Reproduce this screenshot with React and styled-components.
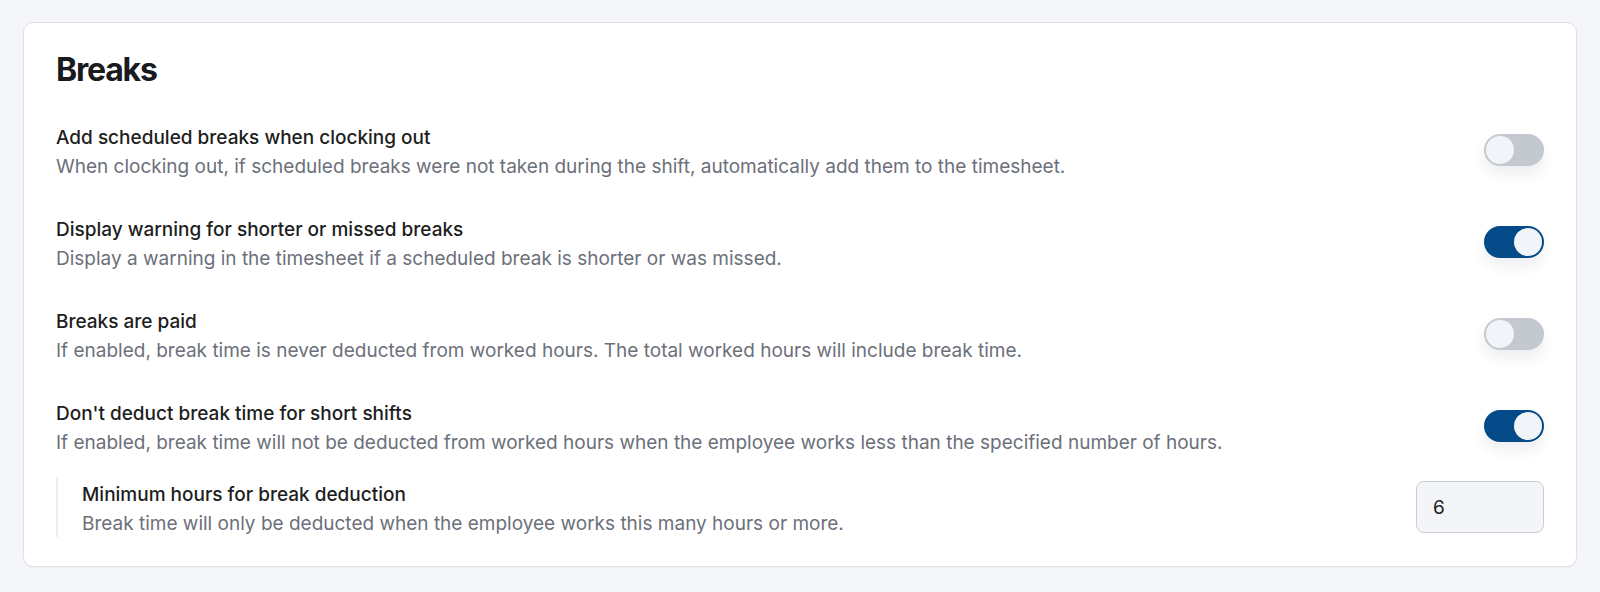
import styled, { createGlobalStyle } from "styled-components";

const GlobalStyle = createGlobalStyle`
    * {
        box-sizing: border-box;
    }

    body {
        margin: 0;
        background-color: #f5f6f9;
        font-family: Inter, "Noto Sans", sans-serif;
        color: #1d1e21;
    }
`;

const PageStyle = styled.main`
    padding: 22px 23px 24px;
`;

const CardStyle = styled.section`
    background-color: #ffffff;
    border: 1px solid #dfe1e6;
    border-radius: 10px;
    padding: 27px 32px 29px;
    box-shadow: 0 1px 2px rgba(16, 24, 40, 0.04);
`;

const CardTitleStyle = styled.h2`
    margin: 0 0 16px;
    font-size: 32px;
    line-height: 40px;
    font-weight: 700;
    letter-spacing: -1.2px;
    color: #1a1b1e;
`;

const SettingRowStyle = styled.div`
    display: flex;
    align-items: flex-start;
    justify-content: space-between;
    gap: 32px;
    padding: ${(props) => (props.$nested ? "4px 0 0 24px" : "18px 0")};
    margin-top: ${(props) => (props.$nested ? "3px" : "0")};
    border-left: ${(props) => (props.$nested ? "2px solid #eceef1" : "none")};
`;

const SettingTextStyle = styled.div`
    display: flex;
    flex-direction: column;
    gap: 2px;
`;

const SettingLabelStyle = styled.span`
    font-size: 19px;
    line-height: 27px;
    font-weight: 500;
    color: #1d1e21;
`;

const SettingDescriptionStyle = styled.span`
    font-size: 19px;
    line-height: 27px;
    color: #6c707a;
`;

const ToggleStyle = styled.button`
    position: relative;
    flex-shrink: 0;
    width: 60px;
    height: 32px;
    margin-top: 10px;
    padding: 0;
    border: none;
    border-radius: 16px;
    cursor: pointer;
    background-color: ${(props) => (props.$on ? "#044a88" : "#c4c8cf")};
    box-shadow: 0 8px 14px rgba(30, 40, 60, 0.08);

    &::after {
        content: "";
        position: absolute;
        top: 2px;
        left: ${(props) => (props.$on ? "30px" : "2px")};
        width: 28px;
        height: 28px;
        border-radius: 50%;
        background-color: #f1f4f9;
    }
`;

const NumberInputStyle = styled.input`
    width: 128px;
    height: 52px;
    flex-shrink: 0;
    padding: 0 16px;
    border: 1px solid #c9ccd2;
    border-radius: 8px;
    background-color: #f3f5f8;
    font-family: Inter, "Noto Sans", sans-serif;
    font-size: 19px;
    color: #1d1e21;
    outline: none;
`;

const settings = [
    {
        label: "Add scheduled breaks when clocking out",
        description:
            "When clocking out, if scheduled breaks were not taken during the shift, automatically add them to the timesheet.",
        on: false,
    },
    {
        label: "Display warning for shorter or missed breaks",
        description:
            "Display a warning in the timesheet if a scheduled break is shorter or was missed.",
        on: true,
    },
    {
        label: "Breaks are paid",
        description:
            "If enabled, break time is never deducted from worked hours. The total worked hours will include break time.",
        on: false,
    },
    {
        label: "Don't deduct break time for short shifts",
        description:
            "If enabled, break time will not be deducted from worked hours when the employee works less than the specified number of hours.",
        on: true,
    },
];

function App() {
    return (
        <>
            <GlobalStyle />
            <PageStyle>
                <CardStyle>
                    <CardTitleStyle>Breaks</CardTitleStyle>

                    {settings.map((setting) => (
                        <SettingRowStyle key={setting.label}>
                            <SettingTextStyle>
                                <SettingLabelStyle>{setting.label}</SettingLabelStyle>
                                <SettingDescriptionStyle>
                                    {setting.description}
                                </SettingDescriptionStyle>
                            </SettingTextStyle>
                            <ToggleStyle
                                type="button"
                                role="switch"
                                aria-checked={setting.on}
                                $on={setting.on}
                            />
                        </SettingRowStyle>
                    ))}

                    <SettingRowStyle $nested>
                        <SettingTextStyle>
                            <SettingLabelStyle>
                                Minimum hours for break deduction
                            </SettingLabelStyle>
                            <SettingDescriptionStyle>
                                Break time will only be deducted when the employee works this many hours or more.
                            </SettingDescriptionStyle>
                        </SettingTextStyle>
                        <NumberInputStyle type="number" defaultValue={6} />
                    </SettingRowStyle>
                </CardStyle>
            </PageStyle>
        </>
    );
}

export default App;
